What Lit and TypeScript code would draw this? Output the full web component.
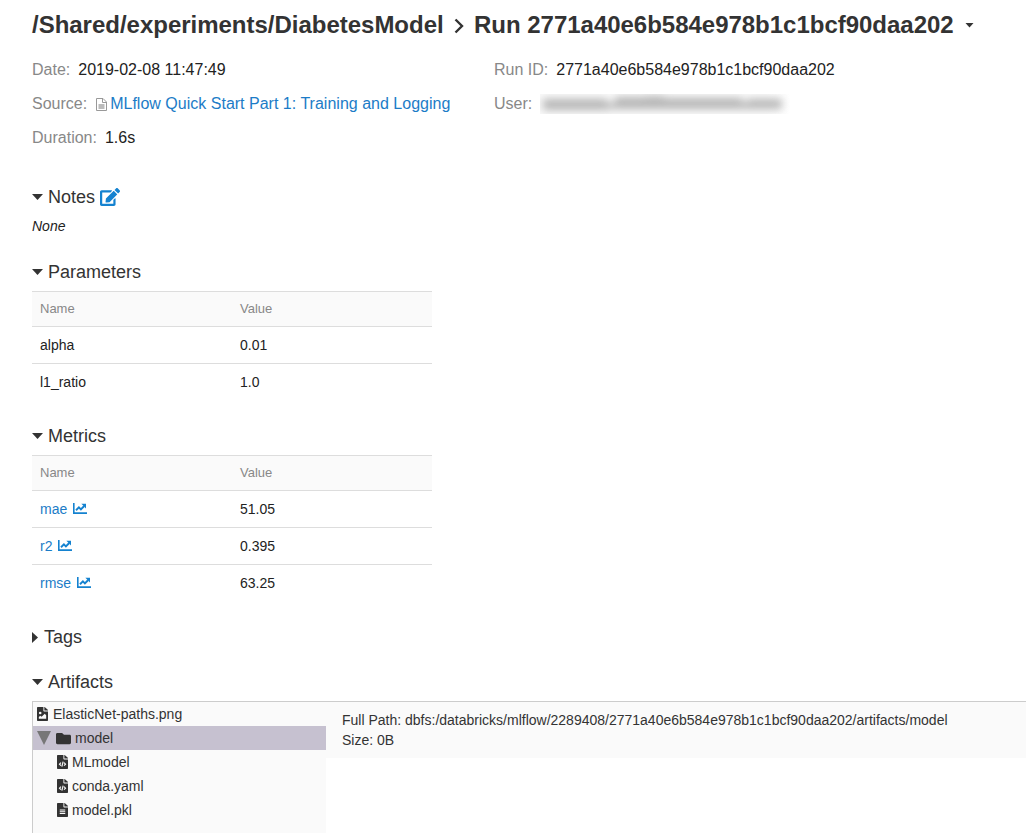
import { LitElement, html, svg, css } from "lit";
import { customElement } from "lit/decorators.js";

const FOLDER = "M464 128H272l-64-64H48C21.49 64 0 85.49 0 112v288c0 26.51 21.49 48 48 48h416c26.51 0 48-21.49 48-48V176c0-26.51-21.49-48-48-48z";
const EDIT = "M402.6 83.2l90.2 90.2c3.8 3.8 3.8 10 0 13.8L274.4 405.6l-92.8 10.3c-12.4 1.4-22.9-9.1-21.5-21.5l10.3-92.8L388.8 83.2c3.8-3.8 10-3.8 13.8 0zm162-22.9l-48.8-48.8c-15.2-15.2-39.9-15.2-55.2 0l-35.4 35.4c-3.8 3.8-3.8 10 0 13.8l90.2 90.2c3.8 3.8 10 3.8 13.8 0l35.4-35.4c15.2-15.3 15.2-40 0-55.2zM384 346.2V448H64V128h229.8c3.2 0 6.2-1.3 8.5-3.5l40-40c7.6-7.6 2.2-20.5-8.5-20.5H48C21.5 64 0 85.5 0 112v352c0 26.5 21.5 48 48 48h352c26.5 0 48-21.5 48-48V306.2c0-10.7-12.9-16-20.5-8.5l-40 40c-2.2 2.3-3.5 5.3-3.5 8.5z";
const FILE = "M224 136V0H24C10.7 0 0 10.7 0 24v464c0 13.3 10.7 24 24 24h336c13.3 0 24-10.7 24-24V160H248c-13.2 0-24-10.8-24-24zM384 121.9v6.1H256V0h6.1c6.4 0 12.5 2.5 17 7l97.9 98c4.5 4.5 7 10.6 7 16.9z";

type FileKind = "image" | "code" | "text";

const marks = {
  image: svg`<g fill="#fafafa"><circle cx="112" cy="216" r="46"/><path d="M64 432v-64l48-48 48 40 110-110 50 50v132z"/></g>`,
  code: svg`<g fill="none" stroke="#fafafa" stroke-width="40"><path d="M138 276l-52 58 52 58M246 276l52 58-52 58M214 244l-44 184"/></g>`,
  text: svg`<path fill="#fafafa" d="M96 238h192v34H96zM96 302h192v34H96zM96 366h192v34H96z"/>`,
};

const fileIcon = (kind: FileKind) => html`<svg class="file" viewBox="0 0 384 512" preserveAspectRatio="none"><path d=${FILE} fill="currentColor"/>${marks[kind]}</svg>`;
const down = html`<svg class="down" viewBox="0 0 11 6"><path d="M0 0h11L5.5 6z" fill="currentColor"/></svg>`;
const right = html`<svg class="right" viewBox="0 0 6 11"><path d="M0 0v11l6-5.5z" fill="currentColor"/></svg>`;
const chart = html`<svg class="chart" viewBox="0 0 14 11"><path d="M0 0h1.6v9.3H14V11H0z" fill="currentColor"/><path d="M3 7.2L5.9 4.4l2 2 3.3-3.4" fill="none" stroke="currentColor" stroke-width="1.9"/><path d="M8.4.8H13v4.6z" fill="currentColor"/></svg>`;

@customElement("app-root")
export class AppRoot extends LitElement {
  static styles = css`
    :host {
      display: block;
      height: 833px;
      overflow: hidden;
      background: #fff;
      color: #333;
      font-family: "Liberation Sans", Arial, sans-serif;
      font-size: 14px;
    }
    * { box-sizing: border-box; }
    svg { display: block; flex: none; }
    .page { padding: 8px 0 0 32px; white-space: nowrap; }
    h1 { margin: 0 0 11px; height: 34px; display: flex; align-items: center; font-size: 24px; font-weight: 700; line-height: 34px; }
    .sep { width: 10px; height: 16px; margin: 1px 10px 0 10px; }
    .exp { width: 412px; letter-spacing: -0.015px; }
    .run { width: 480px; letter-spacing: -0.02px; }
    .caret { width: 9px; height: 5px; margin: 0 0 0 11px; }
    .meta { display: grid; grid-template-columns: 462px 1fr; grid-auto-rows: 34px; font-size: 16px; align-items: center; margin-bottom: 30px; }
    .item { display: flex; align-items: center; }
    .label { color: #888; margin-right: 8px; }
    .value { color: #222; }
    a { color: #1c7cc7; text-decoration: none; }
    .source { letter-spacing: 0.01px; }
    .doc { width: 11px; height: 13px; margin: 1px 3px 0 1px; }
    .redacted { width: 250px; height: 20px; }
    h2 { margin: 0; height: 24px; display: flex; align-items: center; font-size: 18px; font-weight: 400; }
    .down { width: 11px; height: 6px; margin-right: 5px; }
    .right { width: 6px; height: 11px; margin-right: 6px; }
    .edit { width: 20px; height: 18px; margin-left: 5px; color: #1482d0; }
    .none { height: 20px; line-height: 20px; font-style: italic; margin: 7px 0 24px; color: #222; }
    .table { width: 400px; margin: 7px 0 23px; border-top: 1px solid #ddd; color: #222; }
    .row { display: grid; grid-template-columns: 200px 200px; height: 37px; align-items: center; border-bottom: 1px solid #ddd; }
    .row:last-child { border-bottom-color: transparent; }
    .cell { padding-left: 8px; display: flex; align-items: center; }
    .head { height: 35px; background: #fafafa; color: #888; font-size: 13px; padding-bottom: 2px; }
    .chart { width: 14px; height: 11px; margin: 0 0 2px 6px; color: #1482d0; }
    .tags { margin-bottom: 21px; }
    .artifacts { display: flex; align-items: flex-start; height: 132px; margin-top: 7px; border: 1px solid #ccc; border-width: 1px 0 0 1px; }
    .tree { width: 293px; height: 131px; background: #fafafa; }
    .node { height: 24px; display: flex; align-items: center; padding-left: 4px; }
    .child { padding-left: 24px; }
    .file { width: 11px; height: 14px; margin-right: 5px; }
    .child .file { margin-right: 4px; }
    .selected { background: #c6c1d0; }
    .toggle { width: 14px; height: 14px; margin-right: 5px; color: #777; }
    .folder { width: 15px; height: 15px; margin-right: 4px; }
    .info { flex: 1; height: 56px; padding: 8px 0 0 16px; line-height: 20px; background: #fafafa; }
  `;

  private metrics = [["mae", "51.05"], ["r2", "0.395"], ["rmse", "63.25"]];
  private params = [["alpha", "0.01"], ["l1_ratio", "1.0"]];

  private table(rows: string[][], linked: boolean) {
    return html`<div class="table">
      <div class="row head"><div class="cell">Name</div><div class="cell">Value</div></div>
      ${rows.map(([name, value]) => html`<div class="row">
        <div class="cell">${linked ? html`<a>${name}</a>${chart}` : name}</div><div class="cell">${value}</div>
      </div>`)}
    </div>`;
  }

  render() {
    return html`<div class="page">
      <h1>
        <span class="exp">/Shared/experiments/DiabetesModel</span>
        <svg class="sep" viewBox="0 0 10 16"><path d="M1.5 1.5L8 8L1.5 14.5" fill="none" stroke="currentColor" stroke-width="2.4"/></svg>
        <span class="run">Run 2771a40e6b584e978b1c1bcf90daa202</span>
        <svg class="caret" viewBox="0 0 9 5"><path d="M.5 0h8l-4 4.5z" fill="currentColor"/></svg>
      </h1>
      <div class="meta">
        <div class="item"><span class="label">Date:</span><span class="value">2019-02-08 11:47:49</span></div>
        <div class="item"><span class="label">Run ID:</span><span class="value">2771a40e6b584e978b1c1bcf90daa202</span></div>
        <div class="item"><span class="label">Source:</span>
          <svg class="doc" viewBox="0 0 11 13"><path d="M.5.5h6.5l3.5 3.5v8.5H.5zM6.5.5v4h4" fill="#fff" stroke="#999"/><path d="M2.5 6h6v5h-6z" fill="#bbb"/></svg>
          <a class="source">MLflow Quick Start Part 1: Training and Logging</a></div>
        <div class="item"><span class="label">User:</span>
          <svg class="redacted" viewBox="0 0 250 20">
            <defs>
              <filter id="soft" filterUnits="userSpaceOnUse" x="-12" y="-12" width="274" height="44"><feGaussianBlur stdDeviation="4"/></filter>
              <linearGradient id="fade"><stop offset=".9" stop-color="#fafafa"/><stop offset="1" stop-color="#fff"/></linearGradient>
            </defs>
            <rect width="250" height="20" fill="url(#fade)"/>
            <path fill="#777" opacity=".52" filter="url(#soft)" d="M3 5h64v11H3zM67 9h8v6h-8zM75 3h31v12H75zM106 2h18v13h-18zM124 4h78v11h-78zM202 8h6v7h-6zM208 5h34v10h-34z"/>
          </svg></div>
        <div class="item"><span class="label">Duration:</span><span class="value">1.6s</span></div>
      </div>
      <h2>${down}<span>Notes</span><svg class="edit" viewBox="0 0 576 512"><path d=${EDIT} fill="currentColor"/></svg></h2>
      <div class="none">None</div>
      <h2>${down}<span>Parameters</span></h2>
      ${this.table(this.params, false)}
      <h2>${down}<span>Metrics</span></h2>
      ${this.table(this.metrics, true)}
      <h2 class="tags">${right}<span>Tags</span></h2>
      <h2>${down}<span>Artifacts</span></h2>
      <div class="artifacts">
        <div class="tree">
          <div class="node">${fileIcon("image")}<span>ElasticNet-paths.png</span></div>
          <div class="node selected">
            <svg class="toggle" viewBox="0 0 14 14"><path d="M0 0h14L7 14z" fill="currentColor"/></svg>
            <svg class="folder" viewBox="0 0 512 512"><path d=${FOLDER} fill="currentColor"/></svg><span>model</span>
          </div>
          <div class="node child">${fileIcon("code")}<span>MLmodel</span></div>
          <div class="node child">${fileIcon("code")}<span>conda.yaml</span></div>
          <div class="node child">${fileIcon("text")}<span>model.pkl</span></div>
        </div>
        <div class="info">
          <div>Full Path: dbfs:/databricks/mlflow/2289408/2771a40e6b584e978b1c1bcf90daa202/artifacts/model</div>
          <div>Size: 0B</div>
        </div>
      </div>
    </div>`;
  }
}
